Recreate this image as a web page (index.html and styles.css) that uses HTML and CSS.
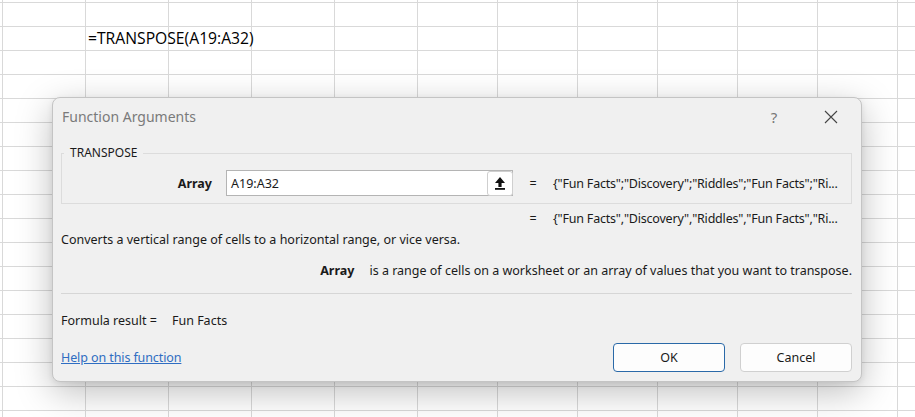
FILE: index.html
```html
<!DOCTYPE html>
<html lang="en">
<head>
<meta charset="utf-8">
<title>Function Arguments</title>
<link rel="stylesheet" href="styles.css">
</head>
<body>
<div class="sheet">
  <div class="cell-formula">=TRANSPOSE(A19:A32)</div>
</div>

<div class="dialog" role="dialog" aria-label="Function Arguments">
  <div class="titlebar">
    <span class="title">Function Arguments</span>
    <span class="help-btn">?</span>
    <span class="close-btn">
      <svg width="14" height="14" viewBox="0 0 14 14"><path d="M1 1 L13 13 M13 1 L1 13" stroke="#444" stroke-width="1.1" fill="none"/></svg>
    </span>
  </div>
  <div class="body">
    <fieldset class="group">
      <legend class="legend">TRANSPOSE</legend>
      <div class="arg-row">
        <span class="arg-label">Array</span>
        <div class="arg-input">
          <span class="arg-text">A19:A32</span>
          <span class="collapse-btn">
            <svg width="12" height="14" viewBox="0 0 12 14"><path d="M6 1 L11 7 L7.6 7 L7.6 11 L4.4 11 L4.4 7 L1 7 Z" fill="#111"/><rect x="1" y="12" width="10" height="1.8" fill="#111"/></svg>
          </span>
        </div>
        <span class="eq">=</span>
        <span class="arg-value">{"Fun Facts";"Discovery";"Riddles";"Fun Facts";"Ri...</span>
      </div>
    </fieldset>
    <div class="result-row">
      <span class="eq">=</span>
      <span class="arg-value">{"Fun Facts","Discovery","Riddles","Fun Facts","Ri...</span>
    </div>
    <p class="desc">Converts a vertical range of cells to a horizontal range, or vice versa.</p>
    <p class="arg-desc"><b>Array</b><span>is a range of cells on a worksheet or an array of values that you want to transpose.</span></p>
    <div class="sep"></div>
    <p class="formula-result"><span>Formula result =</span><span class="fr-value">Fun Facts</span></p>
    <div class="footer">
      <a class="help-link" href="#">Help on this function</a>
      <div class="buttons">
        <button class="btn btn-default">OK</button>
        <button class="btn">Cancel</button>
      </div>
    </div>
  </div>
</div>
</body>
</html>
```

FILE: styles.css
```css
* { box-sizing: border-box; }
html, body { margin: 0; padding: 0; }
body {
  width: 915px;
  height: 417px;
  overflow: hidden;
  position: relative;
  background: #fff;
  font-family: "Noto Sans", "Open Sans", sans-serif;
}
.sheet {
  height: 417px;
  display: grid;
  grid-template-columns: 85px 83px 1fr;
  grid-template-rows: 26px 24px 1fr;
  background-color: #fff;
  background-image:
    linear-gradient(to bottom, #d9d9d9 0 1px, transparent 1px 24px),
    repeating-linear-gradient(to right, #d9d9d9 0 1px, transparent 1px 83px),
    repeating-linear-gradient(to right, #d9d9d9 0 1px, transparent 1px 80px);
  background-size: 100% 24px, 415px 100%, 500px 100%;
  background-position: 0 2px, 2px 0, 417px 0;
  background-repeat: repeat-y, no-repeat, no-repeat;
}
.cell-formula {
  grid-column: 2 / 4;
  grid-row: 2;
  padding-left: 3px;
  font-family: "Open Sans", "Noto Sans", sans-serif;
  font-size: 15.7px;
  line-height: 24px;
  color: #000;
  white-space: nowrap;
}
.dialog {
  position: absolute;
  left: 52px;
  top: 97px;
  width: 810px;
  height: 285px;
  background: #f0f0f0;
  border: 1px solid #c4c4c4;
  border-radius: 8px;
  box-shadow: 0 10px 36px rgba(0,0,0,0.26), 0 2px 6px rgba(0,0,0,0.08);
  font-size: 12.5px;
  color: #1a1a1a;
}
.titlebar {
  height: 37px;
  display: flex;
  align-items: center;
  padding-left: 9px;
}
.title {
  font-size: 14px;
  color: #7a7a7a;
  flex: 1;
}
.help-btn {
  width: 58px;
  text-align: center;
  color: #777;
  font-size: 15px;
}
.close-btn {
  width: 58px;
  display: flex;
  justify-content: center;
  padding-right: 2px;
}
.body {
  padding: 0 9px 0 8px;
}
.group {
  margin: 13px 0 0;
  padding: 0 0 7px;
  border: 1px solid #dcdcdc;
  min-width: 0;
}
.legend {
  margin-left: 2px;
  padding: 0 6px 0 6px;
  font-size: 12px;
  line-height: 10px;
  color: #1a1a1a;
}
.arg-row, .result-row {
  display: grid;
  grid-template-columns: 150px 14px 287px 40px 1fr;
  align-items: center;
  white-space: nowrap;
}
.arg-row { margin-top: 12px; }
.arg-label {
  grid-column: 1;
  text-align: right;
  font-weight: bold;
}
.arg-input {
  grid-column: 3;
  height: 26px;
  background: #fff;
  border: 1px solid #b4b4b4;
  display: flex;
  align-items: center;
  justify-content: space-between;
  padding: 0 0 0 4px;
}
.collapse-btn {
  width: 26px;
  height: 25px;
  margin-right: -1px;
  border: 1px solid #cfcfcf;
  border-radius: 3px;
  background: #fff;
  display: flex;
  align-items: center;
  justify-content: center;
}
.eq {
  grid-column: 4;
  text-align: center;
}
.arg-value {
  grid-column: 5;
  letter-spacing: -0.2px;
}
.result-row {
  margin-top: 5px;
  padding-left: 1px;
  height: 18px;
}
.desc {
  margin: 4px 0 0;
  line-height: 18px;
}
.arg-desc {
  margin: 13px 0 0;
  line-height: 18px;
  display: flex;
  justify-content: flex-end;
  gap: 15px;
}
.sep {
  margin-top: 13px;
  height: 1px;
  background: #d6d6d6;
}
.formula-result {
  margin: 18px 0 0;
  line-height: 18px;
  display: flex;
  gap: 15px;
}
.footer {
  margin-top: 13px;
  display: flex;
  align-items: center;
  justify-content: space-between;
}
.help-link {
  color: #2f6dc2;
  text-decoration: underline;
  letter-spacing: -0.1px;
}
.buttons {
  display: flex;
  gap: 15px;
}
.btn {
  width: 112px;
  height: 29px;
  background: #fdfdfd;
  border: 1px solid #d0d0d0;
  border-radius: 4px;
  font-family: inherit;
  font-size: 12.5px;
  color: #1a1a1a;
  padding: 0;
}
.btn-default {
  border-color: #2a69a8;
}
```
